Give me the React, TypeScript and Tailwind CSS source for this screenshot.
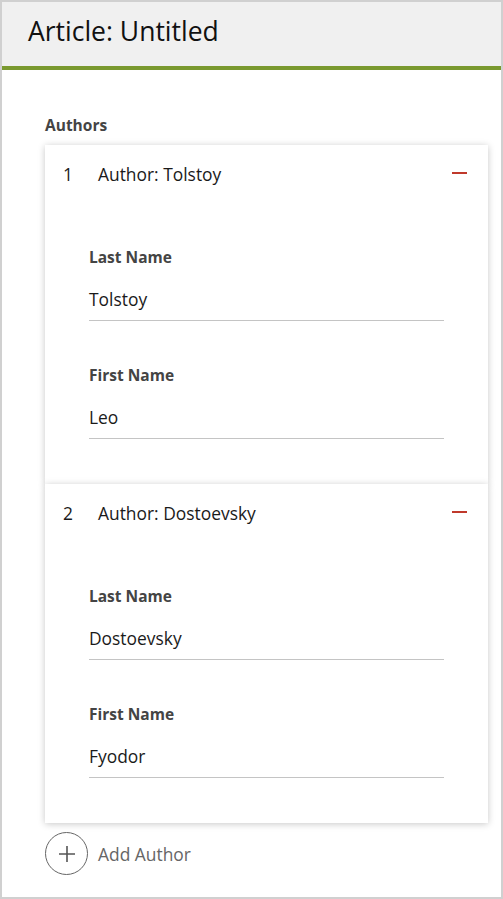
import React from "react";

type Author = { last: string; first: string };

const authors: Author[] = [
  { last: "Tolstoy", first: "Leo" },
  { last: "Dostoevsky", first: "Fyodor" },
];

function Field({ label, value, first }: { label: string; value: string; first?: boolean }) {
  return (
    <div className={first ? "" : "mt-[44px]"}>
      <div className="text-[15.5px] leading-[20px] font-bold text-[#444]">{label}</div>
      <div className="mt-[20px] pb-[9px] border-b border-[#c4c4c4] text-[17.4px] leading-[24px] text-[#1a1a1a]">
        {value}
      </div>
    </div>
  );
}

function AuthorCard({ index, author }: { index: number; author: Author }) {
  return (
    <div className="bg-white shadow-[0_1px_7px_rgba(0,0,0,0.22)]">
      <div className="flex items-center pt-[17px] pl-[18px] pr-[21px] text-[17.4px] leading-[24px] text-[#1a1a1a]">
        <span className="w-[35px]">{index}</span>
        <span className="flex-1">Author: {author.last}</span>
        <span className="block w-[15px] h-[2px] bg-[#c0392b] -mt-[3px]" />
      </div>
      <div className="pt-[61px] pb-[45px] pl-[44px] pr-[44px]">
        <Field label="Last Name" value={author.last} first />
        <Field label="First Name" value={author.first} />
      </div>
    </div>
  );
}

export default function App() {
  return (
    <div
      className="w-[503px] h-[899px] border-2 border-[#d0d0d0] bg-white overflow-hidden"
      style={{ fontFamily: '"Open Sans", "Noto Sans", sans-serif' }}
    >
      <div className="h-[68px] bg-[#f0f0f0] border-b-4 border-[#7a992f] flex items-center pl-[26px] pb-[6px]">
        <h1 className="text-[26.5px] leading-[34px] text-[#111]">Article: Untitled</h1>
      </div>
      <div className="pl-[43px] pr-[13px]">
        <div className="mt-[45px] text-[15.5px] leading-[20px] font-bold text-[#444]">Authors</div>
        <div className="mt-[10px] w-[443px]">
          {authors.map((a, i) => (
            <AuthorCard key={a.last} index={i + 1} author={a} />
          ))}
        </div>
        <div className="mt-[9px] flex items-center gap-[10px]">
          <div className="w-[43px] h-[43px] rounded-full border border-[#666] flex items-center justify-center">
            <svg width="18" height="18" viewBox="0 0 18 18">
              <path d="M9 1v16M1 9h16" stroke="#555" strokeWidth="1.6" />
            </svg>
          </div>
          <span className="text-[17.4px] leading-[24px] text-[#666]">Add Author</span>
        </div>
      </div>
    </div>
  );
}
